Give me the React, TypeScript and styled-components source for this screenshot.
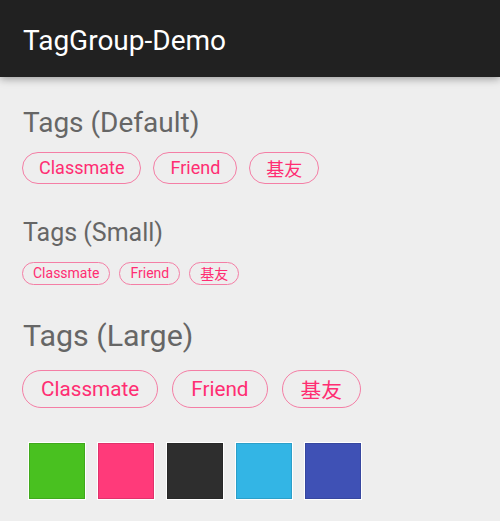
import React from "react";
import styled, { createGlobalStyle } from "styled-components";

type Size = "small" | "default" | "large";

const GlobalStyle = createGlobalStyle`
  html, body {
    margin: 0;
    padding: 0;
    background: #eeeeee;
    font-family: Roboto, "Noto Sans CJK SC", sans-serif;
  }
`;

const sizes = {
  small: { font: 14, height: 23, pad: 10, gap: 9, radius: 12, head: 25, headGap: 14, after: 33 },
  default: { font: 18, height: 32, pad: 16, gap: 12, radius: 16, head: 28, headGap: 12, after: 34 },
  large: { font: 20.7, height: 38, pad: 18, gap: 14, radius: 19, head: 30.4, headGap: 16, after: 35 },
};

const tags = ["Classmate", "Friend", "基友"];
const swatches = ["#49c120", "#ff3a7a", "#2e2e2e", "#33b5e5", "#3f51b5"];

const groups: { size: Size; title: string }[] = [
  { size: "default", title: "Tags (Default)" },
  { size: "small", title: "Tags (Small)" },
  { size: "large", title: "Tags (Large)" },
];

const App = () => {
  return (
    <>
      <GlobalStyle />
      <Page>
        <Toolbar>
          <ToolbarTitle>TagGroup-Demo</ToolbarTitle>
        </Toolbar>
        <Content>
          {groups.map((g) => (
            <Section key={g.size} size={g.size}>
              <Heading size={g.size}>{g.title}</Heading>
              <TagRow size={g.size}>
                {tags.map((t) => (
                  <Tag key={t} size={g.size}>{t}</Tag>
                ))}
              </TagRow>
            </Section>
          ))}
          <SwatchRow>
            {swatches.map((c) => (
              <Swatch key={c} color={c} />
            ))}
          </SwatchRow>
        </Content>
      </Page>
    </>
  );
};

export default App;

const Page = styled.div`
  width: 500px;
  height: 521px;
  background: #eeeeee;
  overflow: hidden;
`;

const Toolbar = styled.div`
  height: 77px;
  background: #212121;
  display: flex;
  align-items: center;
  padding-left: 23px;
  box-shadow: 0 2px 8px rgba(0, 0, 0, 0.35);
  position: relative;
`;

const ToolbarTitle = styled.div`
  color: #ffffff;
  font-size: 28px;
  margin-top: 4px;
`;

const Content = styled.div`
  padding: 29px 22px 0 22px;
  display: flex;
  flex-direction: column;
`;

const Section = styled.div<{ size: Size }>`
  display: flex;
  flex-direction: column;
  margin-bottom: ${(p) => sizes[p.size].after}px;
`;

const Heading = styled.div<{ size: Size }>`
  color: #666666;
  font-size: ${(p) => sizes[p.size].head}px;
  line-height: 1.2;
  margin-left: 1px;
  margin-bottom: ${(p) => sizes[p.size].headGap}px;
`;

const TagRow = styled.div<{ size: Size }>`
  display: flex;
  gap: ${(p) => sizes[p.size].gap}px;
`;

const Tag = styled.div<{ size: Size }>`
  box-sizing: border-box;
  height: ${(p) => sizes[p.size].height}px;
  padding: 0 ${(p) => sizes[p.size].pad}px;
  border: 1.5px solid #f47ea5;
  border-radius: ${(p) => sizes[p.size].radius}px;
  color: #ff2d72;
  font-size: ${(p) => sizes[p.size].font}px;
  display: flex;
  align-items: center;
  justify-content: center;
`;

const SwatchRow = styled.div`
  display: flex;
  gap: 13px;
  padding-left: 7px;
`;

const Swatch = styled.div<{ color: string }>`
  width: 56px;
  height: 56px;
  box-sizing: border-box;
  background: ${(p) => p.color};
  border: 1px solid rgba(0, 0, 0, 0.12);
  outline: 1px solid #ffffff;
`;
